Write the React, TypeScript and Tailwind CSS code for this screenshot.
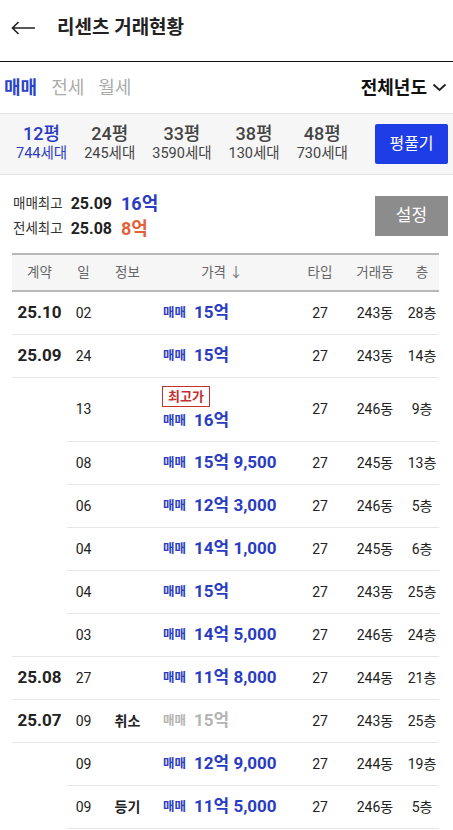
import { ReactNode } from "react";

type Deal = {
  month?: string;
  day: string;
  info?: string;
  price: string;
  dong: string;
  floor: string;
  full?: boolean;
  top?: boolean;
  cancel?: boolean;
};

const deals: Deal[] = [
  { month: "25.10", day: "02", price: "15억", dong: "243동", floor: "28층", full: true },
  { month: "25.09", day: "24", price: "15억", dong: "243동", floor: "14층", full: true },
  { day: "13", price: "16억", dong: "246동", floor: "9층", top: true },
  { day: "08", price: "15억 9,500", dong: "245동", floor: "13층" },
  { day: "06", price: "12억 3,000", dong: "246동", floor: "5층" },
  { day: "04", price: "14억 1,000", dong: "245동", floor: "6층" },
  { day: "04", price: "15억", dong: "243동", floor: "25층" },
  { day: "03", price: "14억 5,000", dong: "246동", floor: "24층", full: true },
  { month: "25.08", day: "27", price: "11억 8,000", dong: "244동", floor: "21층", full: true },
  { month: "25.07", day: "09", info: "취소", price: "15억", dong: "243동", floor: "25층", full: true, cancel: true },
  { day: "09", price: "12억 9,000", dong: "244동", floor: "19층" },
  { day: "09", info: "등기", price: "11억 5,000", dong: "246동", floor: "5층" },
];

const sizes = [
  { py: "12평", units: "744세대" },
  { py: "24평", units: "245세대" },
  { py: "33평", units: "3590세대" },
  { py: "38평", units: "130세대" },
  { py: "48평", units: "730세대" },
];

function Cols({ children }: { children: ReactNode[] }) {
  const widths = ["w-[33px]", "w-[55px]", "w-[140px]", "w-[50px]", "w-[60px]", "flex-1"];
  return (
    <>
      {children.map((c, i) => (
        <div
          key={i}
          className={`${widths[i]} flex items-center ${i === 2 ? "" : "justify-center"}`}
        >
          {c}
        </div>
      ))}
    </>
  );
}

function Price({ deal }: { deal: Deal }) {
  const color = deal.cancel ? "text-[#b4b4b4]" : "text-[#2a3dc2]";
  return (
    <div className={`flex items-center h-[25px] pl-[8px] ${color}`}>
      <span className="text-[12.5px] font-bold">매매</span>
      <span className="ml-[8px] text-[17px] font-bold">{deal.price}</span>
    </div>
  );
}

export default function App() {
  return (
    <div
      className="w-[453px] h-[830px] bg-white text-[#222] overflow-hidden"
      style={{ fontFamily: "Roboto, 'Noto Sans CJK KR', sans-serif" }}
    >
      {/* top bar */}
      <div className="h-[62px] flex items-center pb-[5px] border-b border-[#111]">
        <svg width="25" height="14" viewBox="0 0 25 14" className="ml-[11px]">
          <path
            d="M24 7H1.5M7.5 1L1.5 7L7.5 13"
            fill="none"
            stroke="#222"
            strokeWidth="1.6"
          />
        </svg>
        <h1 className="ml-[21px] text-[19px] font-bold">리센츠 거래현황</h1>
      </div>

      {/* deal type tabs */}
      <div className="h-[51px] flex items-center justify-between pl-[4px] pr-[6px]">
        <div className="flex items-center gap-[14px] text-[18px]">
          <span className="font-bold text-[#2a44c9]">매매</span>
          <span className="text-[#ababab]">전세</span>
          <span className="text-[#ababab]">월세</span>
        </div>
        <div className="flex items-center gap-[5px] text-[18px] font-bold text-[#111]">
          전체년도
          <svg width="15" height="9" viewBox="0 0 15 9">
            <path d="M1.5 1.5L7.5 7L13.5 1.5" fill="none" stroke="#222" strokeWidth="2" />
          </svg>
        </div>
      </div>

      {/* pyeong selector */}
      <div className="h-[62px] flex items-center justify-between bg-[#f6f6f6] border-y border-[#e2e2e2] pl-[16px] pr-[5px]">
        <div className="flex items-center gap-[17px]">
          {sizes.map((s, i) => (
            <div
              key={s.py}
              className={`flex flex-col items-center leading-[20px] ${
                i === 0 ? "text-[#2a3dc2]" : "text-[#444]"
              }`}
            >
              <span className="text-[18px] font-medium">{s.py}</span>
              <span className="text-[14.5px]">{s.units}</span>
            </div>
          ))}
        </div>
        <button className="w-[73px] h-[40px] rounded-[2px] bg-[#1f3de6] text-white text-[16px]">
          평풀기
        </button>
      </div>

      {/* highest prices */}
      <div className="flex items-center justify-between pt-[16px] pb-[12px] pl-[13px] pr-[5px]">
        <div className="flex flex-col">
          <div className="h-[25px] flex items-center">
            <span className="text-[13.5px] text-[#333]">매매최고</span>
            <span className="ml-[8px] text-[16px] font-bold">25.09</span>
            <span className="ml-[9px] text-[18px] font-bold text-[#2a3dc2]">16억</span>
          </div>
          <div className="h-[25px] flex items-center">
            <span className="text-[13.5px] text-[#333]">전세최고</span>
            <span className="ml-[8px] text-[16px] font-bold">25.08</span>
            <span className="ml-[9px] text-[18px] font-bold text-[#e5603a]">8억</span>
          </div>
        </div>
        <button className="w-[73px] h-[40px] bg-[#8c8c8c] text-white text-[17px]">설정</button>
      </div>

      {/* deal table */}
      <div className="ml-[12px] mr-[14px] text-[14px]">
        <div className="h-[39px] flex border-y-2 border-[#b8b8b8] bg-[#f6f6f6] text-[13.5px] text-[#666]">
          <div className="w-[55px] flex items-center justify-center">계약</div>
          <Cols>
            {[
              "일",
              "정보",
              <span key="p" className="w-full text-center pr-[6px]">
                가격 ↓
              </span>,
              "타입",
              "거래동",
              "층",
            ]}
          </Cols>
        </div>

        {deals.map((d, i) => (
          <div key={i} className={`flex ${d.top ? "h-[64px]" : "h-[43px]"}`}>
            <div
              className={`w-[55px] flex items-center justify-center text-[17px] font-bold ${
                d.full ? "border-b border-[#e6e6e6]" : ""
              }`}
            >
              {d.month}
            </div>
            <div className="flex-1 flex border-b border-[#e6e6e6]">
              <Cols>
                {[
                  d.day,
                  <span key="i" className="font-bold">
                    {d.info}
                  </span>,
                  d.top ? (
                    <div key="p" className="flex flex-col">
                      <span className="ml-[7px] mb-[2px] w-fit h-[21px] px-[5px] border border-[#c62f2f] text-[#c62f2f] text-[13px] font-bold leading-[19px]">
                        최고가
                      </span>
                      <Price deal={d} />
                    </div>
                  ) : (
                    <Price key="p" deal={d} />
                  ),
                  "27",
                  d.dong,
                  d.floor,
                ]}
              </Cols>
            </div>
          </div>
        ))}
      </div>
    </div>
  );
}
